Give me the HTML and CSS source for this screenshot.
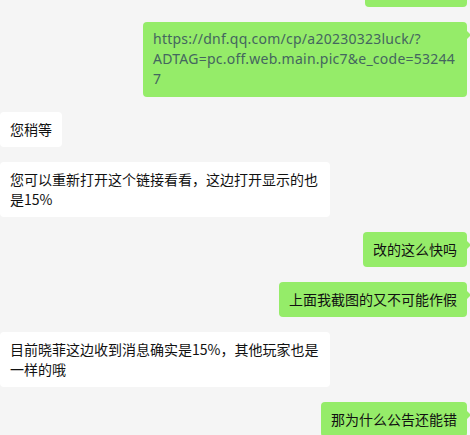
FILE: index.html
```html
<!DOCTYPE html>
<html lang="zh-CN">
<head>
    <meta charset="UTF-8">
    <meta name="viewport" content="width=device-width, initial-scale=1.0">
    <title>聊天记录</title>
    <link rel="stylesheet" href="styles.css">
</head>
<body>

    <div class="chat">
        <div class="msg me">
            <div class="bubble cut"></div>
        </div>
        <div class="msg me">
            <div class="bubble link">https://dnf.qq.com/cp/a20230323luck/?<wbr>ADTAG=pc.off.web.main.pic7&amp;e_code=532447</div>
        </div>
        <div class="msg other">
            <div class="bubble">您稍等</div>
        </div>
        <div class="msg other">
            <div class="bubble">您可以重新打开这个链接看看，这边打开显示的也是15%</div>
        </div>
        <div class="msg me">
            <div class="bubble">改的这么快吗</div>
        </div>
        <div class="msg me">
            <div class="bubble">上面我截图的又不可能作假</div>
        </div>
        <div class="msg other">
            <div class="bubble">目前晓菲这边收到消息确实是15%，其他玩家也是一样的哦</div>
        </div>
        <div class="msg me">
            <div class="bubble">那为什么公告还能错</div>
        </div>
    </div>

</body>
</html>
```

FILE: styles.css
```css
body {
    margin: 0;
    background-color: #f5f5f5;
    font-family: "Noto Sans CJK SC", sans-serif;
    font-size: 14px;
    color: #111;
    overflow: hidden;
}
.chat {
    display: flex;
    flex-direction: column;
    gap: 15px;
    margin-top: -28px;
    padding-right: 3px;
}
.msg {
    display: flex;
}
.msg.me {
    justify-content: flex-end;
}
.msg.other {
    justify-content: flex-start;
}
.bubble {
    position: relative;
    max-width: 330px;
    box-sizing: border-box;
    padding: 7px 10px 8px;
    line-height: 20px;
    border-radius: 4px;
    background-color: #fff;
}
.me .bubble {
    background-color: #95ec69;
}
.me .bubble::after {
    content: "";
    position: absolute;
    right: -4px;
    top: 8px;
    border-left: 5px solid #95ec69;
    border-top: 5px solid transparent;
    border-bottom: 5px solid transparent;
}
.cut {
    width: 102px;
    height: 35px;
}
.link {
    width: 324px;
    color: #44665f;
    font-family: "Noto Sans", sans-serif;
    letter-spacing: 0.25px;
    overflow-wrap: anywhere;
}
```
